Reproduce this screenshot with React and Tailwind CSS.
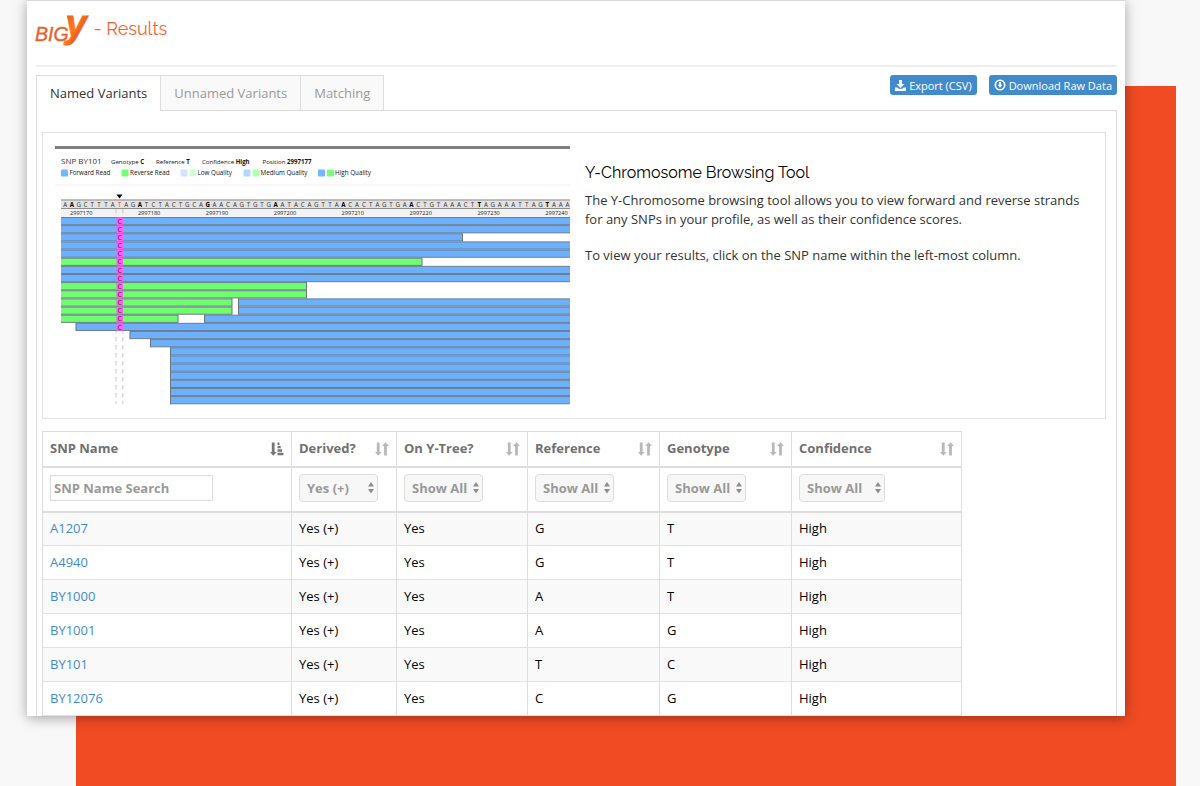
import React, { useState } from 'react';

const SEQUENCE = 'AAGCTTTATAGATCTACTGCAGAACAGTGTGAATACAGTTAACACTAGTGAACTGTAAACTTAGAAATTAGTAAA';
const MARKER = 8;
const BASE_WIDTH = 6.79;

const BLUE = '#6bb1ff';
const GREEN = '#6eff6e';

// each row holds [color, from, to] spans
const READS = [
  [[BLUE, 6, 515]],
  [[BLUE, 6, 515]],
  [[BLUE, 6, 407.5]],
  [[BLUE, 6, 515]],
  [[BLUE, 6, 515]],
  [[GREEN, 6, 367]],
  [[BLUE, 6, 515]],
  [[BLUE, 6, 515]],
  [[GREEN, 6, 251.5]],
  [[GREEN, 6, 251.5]],
  [[GREEN, 6, 177], [BLUE, 183.5, 515]],
  [[GREEN, 6, 177], [BLUE, 183.5, 515]],
  [[GREEN, 6, 123], [BLUE, 149.5, 515]],
  [[BLUE, 21, 515]],
  [[BLUE, 75, 515]],
  [[BLUE, 95.5, 515]],
  ...Array(7).fill([[BLUE, 115.5, 515]]),
];

const LEGEND = [
  { label: 'Forward Read', x: 14.5, swatches: [[6, '#74b8ff']] },
  { label: 'Reverse Read', x: 75, swatches: [[66.5, '#74ff74']] },
  { label: 'Low Quality', x: 142.5, swatches: [[125.5, '#d0e6ff'], [134.5, '#d0ffd0']] },
  { label: 'Medium Quality', x: 205.5, swatches: [[188.5, '#b3d8ff'], [197.5, '#b3ffb3']] },
  { label: 'High Quality', x: 280, swatches: [[263, '#74b8ff'], [272, '#74ff74']] },
];

const FACTS = [
  { label: 'Genotype', value: 'C', x: 56 },
  { label: 'Reference', value: 'T', x: 101 },
  { label: 'Confidence', value: 'High', x: 147 },
  { label: 'Position', value: '2997177', x: 207.5 },
];

const COLUMNS = [
  { label: 'SNP Name', sorted: true },
  { label: 'Derived?', filter: 'Yes (+)', width: 'w-[79px]' },
  { label: 'On Y-Tree?', filter: 'Show All', width: 'w-[79px]' },
  { label: 'Reference', filter: 'Show All', width: 'w-[79px]' },
  { label: 'Genotype', filter: 'Show All', width: 'w-[79px]' },
  { label: 'Confidence', filter: 'Show All', width: 'w-[86px]' },
];

const VARIANTS = [
  ['A1207', 'Yes (+)', 'Yes', 'G', 'T', 'High'],
  ['A4940', 'Yes (+)', 'Yes', 'G', 'T', 'High'],
  ['BY1000', 'Yes (+)', 'Yes', 'A', 'T', 'High'],
  ['BY1001', 'Yes (+)', 'Yes', 'A', 'G', 'High'],
  ['BY101', 'Yes (+)', 'Yes', 'T', 'C', 'High'],
  ['BY12076', 'Yes (+)', 'Yes', 'C', 'G', 'High'],
];

const TABS = ['Named Variants', 'Unnamed Variants', 'Matching'];

const Logo = () => (
  <svg width="54" height="44" viewBox="0 0 54 44" className="overflow-visible" role="img" aria-label="Big Y">
    <defs>
      <linearGradient id="logo" x1="0" y1="0" x2="1" y2="1">
        <stop offset="0.1" stopColor="#e2501c" />
        <stop offset="0.5" stopColor="#ff7a1c" />
        <stop offset="0.8" stopColor="#e04a1a" />
      </linearGradient>
    </defs>
    <g fontFamily='"Liberation Sans", sans-serif' fontStyle="italic">
      <text x="-1" y="34.500" fontSize="19.500" fill="#e8622e" stroke="#e8622e" strokeWidth="0.4">BIG</text>
      <text x="29.500" y="30.500" fontSize="38" fontWeight="700" fill="url(#logo)" stroke="url(#logo)" strokeWidth="1">y</text>
    </g>
  </svg>
);

const SaveIcon = () => (
  <svg width="11" height="11" viewBox="0 0 11 11" fill="currentColor" aria-hidden="true">
    <path d="M4 0h3v4h2.500L5.500 8 1.500 4H4zM0 7.500h2.500l1 1.200h4l1-1.200H11V11H0z" />
  </svg>
);

const DownloadIcon = () => (
  <svg width="12" height="12" viewBox="0 0 12 12" aria-hidden="true">
    <circle cx="6" cy="6" r="4.700" fill="none" stroke="currentColor" strokeWidth="1.600" />
    <path d="M5.100 3h1.800v2.800h1.600L6 8.800 3.500 5.800h1.600z" fill="currentColor" />
  </svg>
);

const SortIcon = ({ sorted }) => (
  <svg
    width="14"
    height="14"
    viewBox="0 0 14 14"
    fill="currentColor"
    aria-hidden="true"
    className={sorted ? 'text-[#777777]' : 'text-[#b8b8b8]'}
  >
    <path d="M1.800 0.500h2.800v9.500h2.100L3.200 13.800 0 10h1.800z" />
    {sorted ? (
      <path d="M7.500 0.500h2v2.400h-2zM7.500 3.900h3.200v2.400H7.500zM7.500 7.300h4.500v2.400H7.500zM7.500 10.700h6v2.600h-6z" />
    ) : (
      <path d="M9.100 13.500h2.800V4H14L10.500 0.200 7.200 4h1.900z" />
    )}
  </svg>
);

const ReadsChart = () => (
  <svg
    width="515"
    height="259"
    viewBox="0 0 515 259"
    className="shrink-0"
    fontFamily='"Open Sans", sans-serif'
    role="img"
    aria-label="Reads around SNP BY101"
  >
    <rect width="515" height="3" fill="#808080" />
    <text x="6" y="18" fontSize="8" fill="#333">SNP BY101</text>
    {FACTS.map(fact => (
      <text key={fact.label} x={fact.x} y="17.500" fontSize="6.100" fill="#111">
        {fact.label} <tspan fontWeight="700">{fact.value}</tspan>
      </text>
    ))}
    {LEGEND.map(item => (
      <g key={item.label}>
        {item.swatches.map(([x, fill]) => (
          <rect key={x} x={x} y="23.500" width="7" height="7" rx="1" fill={fill} />
        ))}
        <text x={item.x} y="29.200" fontSize="6.300" fill="#111">{item.label}</text>
      </g>
    ))}
    <path d="M0 39h515" stroke="#f0f0f0" />

    <path d="M61.500 48.500h6l-3 4z" fill="#000" />
    <rect x="6" y="53.500" width="509" height="8.500" fill="#e2e2e2" />
    <rect x="6" y="63" width="509" height="7.500" fill="#f2f2f2" />
    <path d="M6 54h509M6 62.500h509" stroke="#8c8c8c" />
    <path d="M6 71.500h509" stroke="#777" />
    {SEQUENCE.split('').map((base, i) => (
      <text
        key={i}
        x={10.1 + i * BASE_WIDTH}
        y="60.500"
        fontSize="6.200"
        textAnchor="middle"
        fontWeight={i % 10 === 1 ? 700 : 400}
        fill={i === MARKER ? '#ff3b30' : i % 10 === 1 ? '#000' : '#333'}
      >
        {base}
      </text>
    ))}
    {Array.from({ length: 8 }, (_, i) => (
      <text key={i} x={15 + i * 67.9} y="68.500" fontSize="5.600" fill="#222">
        {2997170 + i * 10}
      </text>
    ))}

    <path d="M61 63v195M67.800 63v195" stroke="#c8c8c8" strokeDasharray="4.500 3.500" />
    {READS.map((spans, row) => (
      <g key={row}>
        {spans.map(([fill, from, to]) => (
          <g key={from}>
            <rect x={from} y={71.5 + row * 8.14} width={to - from} height="7.200" fill={fill} />
            <path
              d={`M${from} ${71.5 + row * 8.14}H${to}M${from} ${78.7 + row * 8.14}H${to}`}
              stroke="#707c88"
            />
            {from > 6 && <path d={`M${from} ${71 + row * 8.14}v8.200`} stroke="#6b7580" />}
            {to < 515 && <path d={`M${to} ${71 + row * 8.14}v8.200`} stroke="#6b7580" />}
          </g>
        ))}
        {row < 14 && (
          <>
            <rect x="61.500" y={71.5 + row * 8.14} width="6.500" height="7.200" fill="#ff5cf4" />
            <text x="64.800" y={77.7 + row * 8.14} fontSize="7" textAnchor="middle" fill="#5a1a5a">C</text>
          </>
        )}
      </g>
    ))}
  </svg>
);

const FilterSelect = ({ column }) => (
  <div className={`relative ${column.width}`}>
    <select
      aria-label={`Filter ${column.label}`}
      className="h-7 w-full appearance-none rounded border border-[#dddddd] bg-[#f7f7f7] pl-[7px] font-bold text-[#999999] outline-none"
    >
      <option>{column.filter}</option>
    </select>
    <svg
      width="6"
      height="12"
      viewBox="0 0 6 12"
      fill="#8c8c8c"
      aria-hidden="true"
      className="pointer-events-none absolute top-2 right-1"
    >
      <path d="M3 0l3 4.600H0zM3 11.600l3-4.600H0z" />
    </svg>
  </div>
);

const VariantsTable = () => {
  const [search, setSearch] = useState('');

  return (
    <table className="table-fixed border-collapse border border-[#dddddd] text-left">
      <colgroup>
        <col className="w-[249px]" />
        <col className="w-[105px]" />
        <col className="w-[131px]" />
        <col className="w-[132px]" />
        <col className="w-[132px]" />
        <col className="w-[170px]" />
      </colgroup>
      <thead>
        <tr className="h-[35px] border-b-2 border-[#dddddd]">
          {COLUMNS.map(column => (
            <th key={column.label} className="border-x border-[#dddddd] px-[7px] py-0 text-[#707070]">
              <div className="flex items-center justify-between">
                {column.label}
                <button type="button" aria-label={`Sort by ${column.label}`}>
                  <SortIcon sorted={column.sorted} />
                </button>
              </div>
            </th>
          ))}
        </tr>
        <tr className="h-[45px] border-b-2 border-[#dddddd]">
          {COLUMNS.map(column => (
            <td key={column.label} className="border-x border-[#dddddd] px-[7px] pt-0 pb-[2px]">
              {column.filter ? (
                <FilterSelect column={column} />
              ) : (
                <input
                  type="text"
                  aria-label="SNP Name Search"
                  placeholder="SNP Name Search"
                  value={search}
                  onChange={e => setSearch(e.target.value)}
                  className="block h-[26px] w-[163px] border border-[#dddddd] px-[3px] font-bold outline-none placeholder:text-[#999999]"
                />
              )}
            </td>
          ))}
        </tr>
      </thead>
      <tbody>
        {VARIANTS.map(([name, ...values]) => (
          <tr key={name} className="h-[34px] border-b border-[#e2e2e2] odd:bg-[#f9f9f9]">
            <td className="border-x border-[#dddddd] px-[7px] py-0">
              <a href={`#${name}`} className="text-[#428bca]">{name}</a>
            </td>
            {values.map((value, i) => (
              <td key={i} className="border-x border-[#dddddd] px-[7px] py-0 text-black">{value}</td>
            ))}
          </tr>
        ))}
      </tbody>
    </table>
  );
};

export default function App() {
  const [tab, setTab] = useState(TABS[0]);

  return (
    <div className="relative min-h-screen bg-[#f8f8f8] pr-[75px] pb-[70px] pl-[27px] font-['Open_Sans',sans-serif] text-[13px] leading-[19px] text-[#333333]">
      <div className="absolute top-[86px] right-6 bottom-0 left-[76px] bg-[#f04b23]" />

      <main className="relative border-t border-[#d8d8d8] bg-white pr-2 pl-[9px] shadow-[0_2px_12px_rgba(0,0,0,0.35)]">
        <header className="flex h-[66px] items-start border-b-2 border-[#eeeeee] pt-[5px]">
          <Logo />
          <h1 className="ml-1 pt-[9px] font-['Raleway',Lato,sans-serif] text-[18px] leading-7 text-[#f26531]">
            - Results
          </h1>
        </header>

        <div className="flex items-start justify-between pt-2">
          <div role="tablist" className="flex">
            {TABS.map(name => (
              <button
                key={name}
                type="button"
                role="tab"
                aria-selected={tab === name}
                onClick={() => setTab(name)}
                className={
                  tab === name
                    ? 'relative -mb-px h-9 border-x border-t border-[#dddddd] bg-white px-[13px] text-[#333333]'
                    : 'h-[35px] border-t border-r border-[#dddddd] bg-[#f9f9f9] px-[13px] text-[#999999]'
                }
              >
                {name}
              </button>
            ))}
          </div>
          <div className="flex gap-3 text-[11px] font-medium text-white">
            <button type="button" className="flex h-5 items-center gap-[3px] rounded-[3px] bg-[#428bca] px-[5px]">
              <SaveIcon />
              Export (CSV)
            </button>
            <button type="button" className="flex h-5 items-center gap-[3px] rounded-[3px] bg-[#428bca] px-[5px]">
              <DownloadIcon />
              Download Raw Data
            </button>
          </div>
        </div>

        <div className="border-x border-t border-[#dddddd] pt-[21px] pr-[10px] pl-[5px]">
          <section className="mb-3 flex border border-[#e2e2e2] px-3 pt-[13px] pb-[13px]">
            <ReadsChart />
            <div className="min-w-0 pt-[17px] pl-[15px]">
              <h2 className="mb-2 font-['Raleway',Lato,sans-serif] text-[16px] leading-5 text-black">
                Y-Chromosome Browsing Tool
              </h2>
              <p className="mb-[17px]">
                The Y-Chromosome browsing tool allows you to view forward and reverse strands for any SNPs in your
                profile, as well as their confidence scores.
              </p>
              <p>To view your results, click on the SNP name within the left-most column.</p>
            </div>
          </section>
          <VariantsTable />
        </div>
      </main>
    </div>
  );
}
